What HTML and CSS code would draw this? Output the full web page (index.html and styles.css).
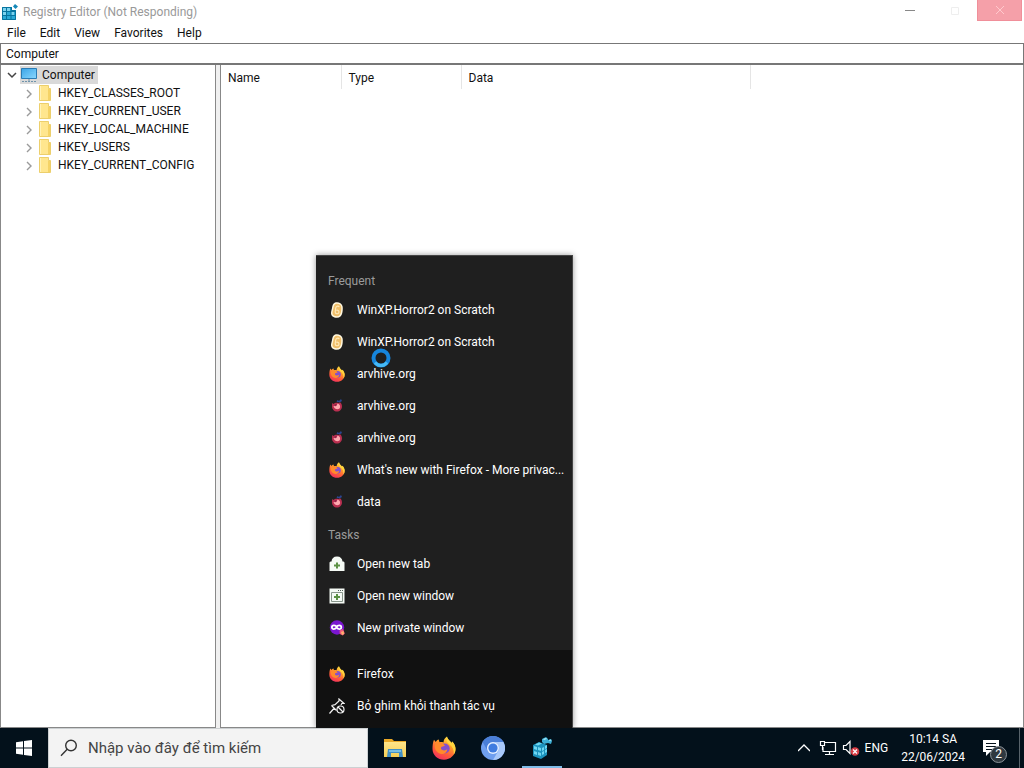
FILE: index.html
```html
<!DOCTYPE html>
<html lang="vi">
<head>
<meta charset="utf-8">
<meta name="viewport" content="width=device-width, initial-scale=1">
<title>Registry Editor</title>
<link rel="stylesheet" href="styles.css">
</head>
<body>
<svg class="defs" aria-hidden="true">
  <defs>
    <linearGradient id="fox-body" x1="0.8" y1="0" x2="0.3" y2="1">
      <stop offset="0" stop-color="#fff04a"/><stop offset="0.35" stop-color="#ffa02a"/>
      <stop offset="0.7" stop-color="#ff5a3a"/><stop offset="1" stop-color="#f0305f"/>
    </linearGradient>
    <linearGradient id="folder-fill" x1="0" y1="0" x2="0" y2="1">
      <stop offset="0" stop-color="#ffe58a"/><stop offset="1" stop-color="#f6cf55"/>
    </linearGradient>
    <linearGradient id="screen-fill" x1="0" y1="0" x2="1" y2="1">
      <stop offset="0" stop-color="#3ba4e6"/><stop offset="1" stop-color="#8ad8ff"/>
    </linearGradient>
  </defs>
  <symbol id="firefox" viewBox="0 0 24 24">
    <path fill="url(#fox-body)" d="M15 .5c.2 1.800 1.300 3 2.600 4.200.9.800 1.600 1.600 2 2.400l.7-1.600c2 2.200 3.200 4.800 3.200 7.500 0 6-5.200 10.700-11.500 10.700S.5 19.200.5 13c0-3 .3-6.800 1.500-9.300l1.800 2.300c.8-1.400 1.700-2 2.900-2.400l.8 2.700c1.300-.4 2.700-.2 4 .2C11.500 4.200 12.800 1.800 15 .5z"/>
    <circle cx="12.700" cy="12.500" r="5" fill="#8450cc"/>
    <path fill="#ff8a2c" d="M3 8.500c2-1.800 5.300-2.200 8-1l2 2.200-3.800 1.300-.2 1.700c1 2 4.300 2.300 6.300.6-.3 3.600-3.800 5.500-6.800 4.500-3.700-1.200-6.500-4.500-5.500-9.300z"/>
    <path fill="#ffd53f" d="M15 .5c.2 1.800 1.300 3 2.600 4.200.9.800 1.600 1.600 2 2.400l.7-1.600c2 2.200 3.200 4.800 3.200 7.500 0 2-.6 4-1.700 5.600.4-4.600-1.300-8.100-4.500-10.300C14.700 6.500 14 4 15 .5z"/>
  </symbol>
  <symbol id="firefox-page" viewBox="0 0 16 16">
    <path fill="#b92f50" d="M3.300 5l1.200 1C5.500 5 7.500 4.500 9.500 5l1.500-.8c1.300 1 2 2.500 2 4.300 0 2.900-2.200 5-5 5s-5-2.100-5-5c0-1.400 0-2.500.3-3.500z"/>
    <path fill="#ffa9b0" d="M4.500 8l2.500.2L8.700 5.500c2.500.9 3.100 3.500 1.800 5C8.500 12 5.500 11.300 4.500 8z"/>
    <path fill="#8a2348" d="M5.500 6.500l2-.5v1.500L6 8z"/>
    <path fill="#2b4690" d="M7.500 4l1-2 1.500 1L12 1l1 2-2 1.300z"/>
  </symbol>
  <symbol id="scratch" viewBox="0 0 16 16">
    <path fill="#fff7df" d="M6 .6C9-.5 12.700 1 13.500 4c.5 2 .3 4.500-.2 7-.6 3.200-2.600 4.800-5.600 4.700C4.500 15.600 2 14 2 11.200c0-1.800.5-2.800.9-4.700C3.300 4 3.800 1.400 6 .6z"/>
    <path fill="#f0bf6a" d="M6.500 2C9 1.200 11.600 2.300 12.100 4.500c.4 1.800.2 4-.3 6-.5 2.500-1.800 3.800-4 3.700-2.500 0-4.300-1-4.300-3 0-1.500.4-2.600.8-4.400C4.700 4.700 5 2.500 6.500 2z"/>
    <path fill="none" stroke="#ffe9b8" stroke-width="1.200" d="M10.300 5C9.300 3.600 7 4 6.700 6l-.5 4c0 2.300 3.300 2.300 3.700.3.300-1.800-1-2.300-2.600-2"/>
  </symbol>
  <symbol id="regedit" viewBox="0 0 24 24">
    <path fill="#1c93bd" d="M3 9l6-3 8 3v10l-6 4-8-3z"/>
    <path fill="#6fd6f1" d="M4 10l3 1v3l-3-1zm4 1l3 1v3l-3-1zm-4 4l3 1v3l-3-1zm4 1l3 1v3l-3-1zm4-4l2-1v3l-2 1zm3-2l2-1v3l-2 1zm-3 6l2-1v3l-2 1zm3-2l2-1v3l-2 1zM5 8.500l4-2 3 1-4 2z"/>
    <path fill="#3cafd6" d="M12 3l4-2 2 2v4l-4 1-2-2zm6 1l3-1 1 2-1 3-3-1z"/>
    <path fill="#a5e9fa" d="M13 3l3-1 1 1-3 1zm6 1l2-.5.5 1-2 .5z"/>
  </symbol>
  <symbol id="regedit-small" viewBox="0 0 16 16">
    <path fill="#2ba9d5" d="M0 3h10v3h4v10H0z"/>
    <path fill="#7dd3ee" d="M1 4h3v3H1zm4 0h3v3H5zM1 8h3v3H1zm8 0h3v3H9z"/>
    <path fill="none" stroke="#08749f" d="M.5 3.500h9v3h4v9H.5zM0 7.500h13M0 11.500h13M4.500 3v13M9 3v13"/>
    <path fill="#1688b8" d="M13 0l3 2.500L13.500 5 11 2.500z"/>
  </symbol>
  <symbol id="folder" viewBox="0 0 16 18">
    <path fill="#ffe68e" stroke="#eccf6c" d="M1.500 1.500h9v3h2v12h-11z"/>
    <path fill="#f5d366" d="M10 5h2v11h-2z"/><path fill="none" stroke="#fff2b8" d="M2.500 2v14"/>
  </symbol>
  <symbol id="chevron-right" viewBox="0 0 10 10"><path fill="none" stroke="#9a9a9a" stroke-width="1.400" d="M3 1l4 4-4 4"/></symbol>
</svg>

<main class="window">
  <header class="titlebar">
    <svg class="icon16"><use href="#regedit-small"/></svg>
    <h1 class="title">Registry Editor (Not Responding)</h1>
    <div class="controls">
      <button class="control" aria-label="Minimize"><svg class="icon12" viewBox="0 0 12 12"><path d="M1 5.500h10" stroke="#888"/></svg></button>
      <button class="control" aria-label="Maximize"><svg class="icon12" viewBox="0 0 12 12"><path d="M2.500 2.500h7v7h-7z" fill="none" stroke="#eee"/></svg></button>
      <button class="control close" aria-label="Close"><svg class="icon12" viewBox="0 0 12 12"><path d="M2 2l8 8M10 2l-8 8" stroke="#ffc9cd"/></svg></button>
    </div>
  </header>
  <nav class="menubar" aria-label="Menu">
    <button>File</button><button>Edit</button><button>View</button><button>Favorites</button><button>Help</button>
  </nav>
  <input class="address" type="text" aria-label="Address" value="Computer">
  <div class="panes">
    <section class="tree" aria-label="Registry keys">
      <div class="root">
        <svg class="icon10" viewBox="0 0 10 10"><path fill="none" stroke="#444" stroke-width="1.500" d="M1 3l4 4 4-4"/></svg>
        <span class="selected">
          <svg class="icon16" viewBox="0 0 16 16"><path fill="url(#screen-fill)" stroke="#2b7cb5" d="M.5 1.500h15v10H.5z"/><path stroke="#6f94ac" d="M8 12v2M1 14.500h14" stroke-dasharray="2 1"/></svg>
          <span>Computer</span>
        </span>
      </div>
      <ul class="keys">
        <li><svg class="icon10"><use href="#chevron-right"/></svg><svg class="folder"><use href="#folder"/></svg><span>HKEY_CLASSES_ROOT</span></li>
        <li><svg class="icon10"><use href="#chevron-right"/></svg><svg class="folder"><use href="#folder"/></svg><span>HKEY_CURRENT_USER</span></li>
        <li><svg class="icon10"><use href="#chevron-right"/></svg><svg class="folder"><use href="#folder"/></svg><span>HKEY_LOCAL_MACHINE</span></li>
        <li><svg class="icon10"><use href="#chevron-right"/></svg><svg class="folder"><use href="#folder"/></svg><span>HKEY_USERS</span></li>
        <li><svg class="icon10"><use href="#chevron-right"/></svg><svg class="folder"><use href="#folder"/></svg><span>HKEY_CURRENT_CONFIG</span></li>
      </ul>
    </section>
    <section class="values" aria-label="Values">
      <table class="grid">
        <thead><tr><th class="col-name">Name</th><th class="col-type">Type</th><th class="col-data">Data</th><td></td></tr></thead>
      </table>
    </section>
  </div>
</main>

<aside class="jumplist" aria-label="Firefox">
  <div class="jump-main">
    <h2>Frequent</h2>
    <button><svg class="icon16"><use href="#scratch"/></svg><span>WinXP.Horror2 on Scratch</span></button>
    <button><svg class="icon16"><use href="#scratch"/></svg><span>WinXP.Horror2 on Scratch</span></button>
    <button><svg class="icon16"><use href="#firefox"/></svg><span>arvhive.org</span></button>
    <button><svg class="icon16"><use href="#firefox-page"/></svg><span>arvhive.org</span></button>
    <button><svg class="icon16"><use href="#firefox-page"/></svg><span>arvhive.org</span></button>
    <button><svg class="icon16"><use href="#firefox"/></svg><span>What's new with Firefox - More privac...</span></button>
    <button><svg class="icon16"><use href="#firefox-page"/></svg><span>data</span></button>
    <h2>Tasks</h2>
    <button><svg class="icon16" viewBox="0 0 16 16"><path fill="#f5faf5" d="M.5 15V7c0-1 .5-1.500 2-1.500C2.700 2.500 4.500.5 8 .5s5.300 2 5.500 5c1.500 0 2 .5 2 1.500v8z"/><path stroke="#5b9144" stroke-width="2" d="M8 6.500v6M5 9.500h6"/></svg><span>Open new tab</span></button>
    <button><svg class="icon16" viewBox="0 0 16 16"><path fill="#f5faf5" d="M.5.500h15v15H.5z"/><path fill="none" stroke="#87958a" d="M2.500 4.500h11v9h-11z"/><path stroke="#526057" d="M9 2.500h5" stroke-dasharray="1 1"/><path stroke="#5b9144" stroke-width="2" d="M8 6v6M5 9h6"/></svg><span>Open new window</span></button>
    <button><svg class="icon16" viewBox="0 0 16 16"><circle cx="8" cy="7.500" r="7.200" fill="#7a16d0"/><path fill="none" stroke="#fff" stroke-width="1.800" d="M7.600 7c-1-2.300-4.700-2.300-4.700.2s3.700 2.500 4.700-.2c1-2.300 4.700-2.300 4.700.2s-3.700 2.500-4.700-.2z"/><path fill="#f05a7b" d="M10.500 10.500l3.500-1.500 1.800 4.500-2 2-3-1.500z"/><path fill="#ffb16c" d="M12 12l2.500-1 .5 3-2 1z"/></svg><span>New private window</span></button>
  </div>
  <div class="jump-footer">
    <button><svg class="icon16"><use href="#firefox"/></svg><span>Firefox</span></button>
    <button><svg class="icon16" viewBox="0 0 16 16"><g fill="none" stroke="#f2f2f2" stroke-width="1.200"><path d="M.5 15.500l4.800-5.500M2.500 7.500l3.500-.8 4-3.700V1l5 4.500h-2.200L12 7M2.500 7.500l5 5"/><circle cx="11.500" cy="11.500" r="3.500"/><path d="M9 9l5 5"/></g></svg><span>Bỏ ghim khỏi thanh tác vụ</span></button>
  </div>
</aside>

<svg class="busy" viewBox="0 0 20 20" aria-hidden="true"><circle cx="10" cy="10" r="7.500" fill="none" stroke="#1685dc" stroke-width="4"/><path d="M4 14.500A7.500 7.500 0 0 0 16 14.500" fill="none" stroke="#45b9f6" stroke-width="3"/></svg>

<footer class="taskbar">
  <button class="start" aria-label="Start"><svg class="icon16" viewBox="0 0 16 16"><path fill="#fff" d="M0 2.200L7 1.200v6.300H0zM8 1l8-1v7.500H8zM0 8.500h7v6.300l-7-1zM8 8.500h8V16l-8-1.100z"/></svg></button>
  <label class="search">
    <svg class="icon18" viewBox="0 0 18 18"><g fill="none" stroke="#333" stroke-width="1.400"><circle cx="11" cy="6.500" r="5.300"/><path d="M7.200 10.300L1 16.800"/></g></svg>
    <input type="text" aria-label="Tìm kiếm" placeholder="Nhập vào đây để tìm kiếm">
  </label>
  <nav class="apps" aria-label="Apps">
    <button aria-label="File Explorer"><svg class="icon24" viewBox="0 0 24 24"><path fill="#eaa927" d="M1 3h8l2 2h12v5H1z"/><path fill="url(#folder-fill)" d="M1 6h22v15H1z"/><path fill="#4290c5" d="M5 13h14l1 8h-4v-4H8v4H4z"/><path fill="#77bfe5" d="M6 14h12v2H6z"/></svg></button>
    <button aria-label="Firefox"><svg class="icon24"><use href="#firefox"/></svg></button>
    <button aria-label="Chromium"><svg class="icon24" viewBox="0 0 24 24"><circle cx="12" cy="12" r="12" fill="#6f9fef"/><path fill="#4a7fd8" d="M1.600 6A12 12 0 0 1 22.400 6H12a6 6 0 0 0-5.200 9z"/><path fill="#a9c9fa" d="M22.400 6A12 12 0 0 1 12 24l5.200-9A6 6 0 0 0 12 6z"/><circle cx="12" cy="12" r="6" fill="#e4efff"/><circle cx="12" cy="12" r="4.600" fill="#3f7ce0"/></svg></button>
    <button class="active" aria-label="Registry Editor"><svg class="icon24"><use href="#regedit"/></svg></button>
  </nav>
  <div class="tray">
    <button aria-label="Hidden icons"><svg class="icon12" viewBox="0 0 12 12"><path fill="none" stroke="#fff" stroke-width="1.300" d="M0 9l6-6 6 6"/></svg></button>
    <button aria-label="Network"><svg class="icon18" viewBox="0 0 18 18"><path fill="none" stroke="#fff" stroke-width="1.200" d="M5 3.500h11.500v9H4V8M10.500 12.500v3M6 15.500h9M1.500 2.500h4v4h-4zM3.500 7v4"/></svg></button>
    <button aria-label="Volume"><svg class="icon18" viewBox="0 0 18 18"><path fill="none" stroke="#fff" stroke-width="1.200" d="M1.500 6.500H4l4-4v12l-4-4H1.500z"/><circle cx="13" cy="12.500" r="4.300" fill="#d93c43"/><path stroke="#fff" stroke-width="1.300" d="M11 10.500l4 4M15 10.500l-4 4"/></svg></button>
    <button class="lang">ENG</button>
    <button class="clock"><time>10:14 SA</time><span>22/06/2024</span></button>
    <button class="notify" aria-label="Notifications"><svg class="icon18" viewBox="0 0 18 18"><path fill="#fff" d="M1 1h16v12H8l-4 4v-4H1z"/><path stroke="#06131d" stroke-width="1.200" d="M4 4.500h10M4 7.500h10M4 10.500h6"/></svg><span class="badge">2</span></button>
    <button class="peek" aria-label="Show desktop"></button>
  </div>
</footer>
</body>
</html>
```
FILE: styles.css
```css
* { box-sizing: border-box; }
body {
  display: flex;
  flex-direction: column;
  height: 100vh;
  margin: 0;
  position: relative;
  overflow: hidden;
  background: #fff;
  color: #111;
  font: 12px/16px Roboto, "Noto Sans", sans-serif;
}
button, input { font: inherit; color: inherit; }
button { margin: 0; padding: 0; border: 0; background: none; white-space: nowrap; }
h1, h2 { margin: 0; font: inherit; }
svg { flex: none; display: block; }
.defs { position: absolute; width: 0; height: 0; }
.icon10 { width: 10px; height: 10px; }
.icon12 { width: 12px; height: 12px; }
.icon16 { width: 16px; height: 16px; }
.icon18 { width: 18px; height: 18px; }
.icon24 { width: 24px; height: 24px; }
.folder { width: 16px; height: 18px; }

.window { flex: 1; min-height: 0; display: flex; flex-direction: column; }
.titlebar { display: flex; align-items: center; height: 24px; padding-left: 2px; gap: 5px; }
.title { flex: 1; color: #999; }
.controls { display: flex; align-self: flex-start; height: 21px; }
.control { display: grid; place-items: center; width: 45px; }
.control.close { background: #f5a0a9; border: 1px solid #f08f9a; border-top: 0; margin-right: 2px; }
.menubar { display: flex; gap: 14px; height: 19px; padding: 0 7px 2px; }
.address { width: 100%; height: 21px; padding: 0 5px; border: 1px solid #777; border-radius: 0; background: #fff; outline: 0; }
.panes { flex: 1; min-height: 0; display: grid; grid-template-columns: 216px 1fr; gap: 4px; background: #f0f0f0; border-top: 1px solid #777; }
.tree, .values { background: #fff; border: 1px solid #888; border-top: 0; }
.root { display: flex; align-items: center; gap: 3px; height: 19px; padding: 1px 0 0 6px; }
.selected { display: flex; align-items: center; gap: 5px; height: 18px; padding: 0 3px 0 1px; background: #d9d9d9; }
.keys { list-style: none; margin: 0; padding: 0; }
.keys li { display: flex; align-items: center; gap: 4px; height: 18px; padding-left: 23px; }
.keys .icon10 { margin-top: 2px; }
.grid { width: 100%; border-collapse: collapse; table-layout: fixed; }
.grid th { height: 24px; padding: 2px 0 0 7px; text-align: left; font-weight: 400; border-right: 1px solid #e5e5e5; }
.col-name { width: 120px; }
.col-type { width: 120px; }
.col-data { width: 289px; }

.jumplist {
  position: absolute;
  left: 316px;
  bottom: 40px;
  width: 257px;
  border: 1px solid #444;
  border-width: 1px 1px 0 0;
  background: #1f1f1f;
  color: #fff;
  box-shadow: 0 0 6px rgba(0, 0, 0, 0.4);
}
.jumplist h2 { height: 30px; padding: 9px 12px 0; color: #9b9b9b; }
.jumplist button { display: flex; align-items: center; gap: 12px; width: 100%; height: 32px; padding: 0 5px 0 13px; }
.jump-main { padding: 8px 0 6px; }
.jump-footer { padding: 8px 0 6px; background: #111; }
.busy { position: absolute; left: 371px; top: 348px; width: 20px; height: 20px; }

.taskbar { position: relative; display: flex; height: 40px; background: #03111b; color: #fff; }
.start { display: grid; place-items: center; width: 48px; }
.search { display: flex; align-items: center; gap: 10px; width: 320px; padding-left: 11px; background: #f3f3f3; border: 1px solid #ccd0d2; }
.search input { flex: 1; min-width: 0; padding: 0; border: 0; outline: 0; background: none; color: #333; font-size: 15px; line-height: 20px; }
.search input::placeholder { color: #444; opacity: 1; }
.apps { display: flex; flex: 1; gap: 9px; padding-left: 7px; }
.apps button { display: grid; place-items: center; width: 40px; }
.apps .active { border-bottom: 2px solid #7fbce8; padding-top: 2px; }
.tray { display: flex; align-items: center; }
.tray button { height: 40px; margin-right: 9px; }
.tray .icon18 { margin-right: -4px; }
.tray .clock { display: flex; flex-direction: column; align-items: center; justify-content: center; gap: 2px; margin: 0 17px 0 4px; }
.tray .notify { position: relative; margin-right: 19px; width: 18px; }
.badge { position: absolute; left: 8px; bottom: 5px; width: 17px; height: 17px; border: 1px solid #8b9298; border-radius: 50%; background: #303940; line-height: 15px; }
.tray .peek { width: 5px; margin: 0; border-left: 1px solid #58636b; }
```
